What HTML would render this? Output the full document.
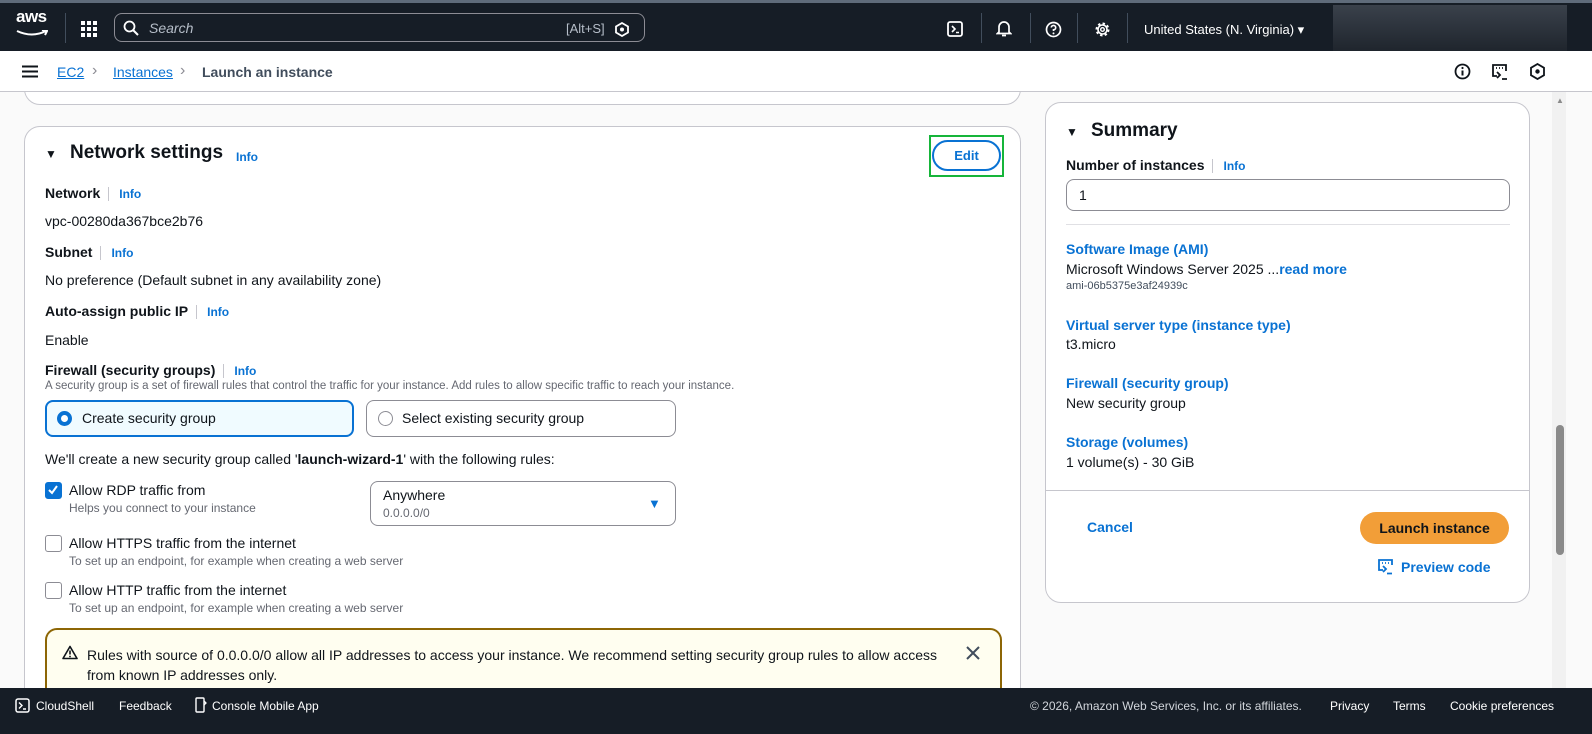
<!DOCTYPE html>
<html><head><meta charset="utf-8"><style>
*{box-sizing:border-box;margin:0;padding:0}
body{width:1592px;height:734px;overflow:hidden;background:#fafafa;font-family:"Liberation Sans",sans-serif;color:#0f141a;font-size:14px;position:relative}
.abs{position:absolute}
.top{left:0;top:0;width:1592px;height:51px;background:#161d26;border-top:3px solid #5f6b7a;z-index:10}
.crumb{left:0;top:51px;width:1592px;height:41px;background:#fff;border-bottom:1px solid #c6c6cd;z-index:10}
.card{background:#fff;border:1px solid #c6c6cd;border-radius:16px}
.lbl{font-weight:bold;font-size:14px}
.info{color:#0972d3;font-weight:bold;font-size:12px;border-left:1px solid #c6c6cd;padding-left:10px;margin-left:8px}
.blue{color:#0972d3}
.small{font-size:12px;color:#656871}
.wt{color:#fff;font-size:13px}
.cb{width:17px;height:17px;border:1.5px solid #8c8c94;border-radius:3px;background:#fff}
</style></head><body>
<div class="abs top">
 <div class="abs wt" style="left:16px;top:4px;font-size:17px;font-weight:bold;letter-spacing:-0.5px">aws</div>
 <svg class="abs" style="left:16px;top:27px" width="32" height="8"><path d="M1 1 Q16 8 30 1 M26 0 L31 1 L29 5" stroke="#fff" stroke-width="2" fill="none"/></svg>
 <div class="abs" style="left:65px;top:10px;width:1px;height:30px;background:#414d5c"></div>
 <svg class="abs" style="left:81px;top:18px" width="16" height="16" fill="#fff"><rect x="0" y="0" width="4" height="4"/><rect x="6" y="0" width="4" height="4"/><rect x="12" y="0" width="4" height="4"/><rect x="0" y="6" width="4" height="4"/><rect x="6" y="6" width="4" height="4"/><rect x="12" y="6" width="4" height="4"/><rect x="0" y="12" width="4" height="4"/><rect x="6" y="12" width="4" height="4"/><rect x="12" y="12" width="4" height="4"/></svg>
 <div class="abs" style="left:114px;top:10px;width:531px;height:29px;border:1.5px solid #8c8c94;border-radius:8px"></div>
 <svg class="abs" style="left:123px;top:17px" width="16" height="16"><circle cx="6.5" cy="6.5" r="5" stroke="#fff" stroke-width="1.8" fill="none"/><path d="M10 10 L15 15" stroke="#fff" stroke-width="2"/></svg>
 <div class="abs" style="left:149px;top:17px;color:#b6bec9;font-style:italic;font-size:14px">Search</div>
 <div class="abs" style="left:566px;top:18px;color:#b6bec9;font-size:13px">[Alt+S]</div>
 <svg class="abs" style="left:615px;top:19px" width="14" height="15"><path d="M7 1 L13 4.5 L13 10.5 L7 14 L1 10.5 L1 4.5Z" stroke="#fff" stroke-width="1.8" fill="none"/><circle cx="7" cy="7.5" r="2" fill="#fff"/></svg>
 <svg class="abs" style="left:947px;top:18px" width="16" height="16"><rect x="1" y="1" width="14" height="14" rx="2" stroke="#fff" stroke-width="1.8" fill="none"/><path d="M5 5 L8 8 L5 11 M9 11.5 H12" stroke="#fff" stroke-width="1.6" fill="none"/></svg>
 <div class="abs" style="left:981px;top:10px;width:1px;height:30px;background:#414d5c"></div>
 <svg class="abs" style="left:996px;top:17px" width="16" height="18"><path d="M3 12 V7 A5 5 0 0 1 13 7 V12 L14.5 13.5 H1.5Z M6 15.5 H10" stroke="#fff" stroke-width="1.7" fill="none"/></svg>
 <div class="abs" style="left:1030px;top:10px;width:1px;height:30px;background:#414d5c"></div>
 <svg class="abs" style="left:1045px;top:18px" width="17" height="17"><circle cx="8.5" cy="8.5" r="7" stroke="#fff" stroke-width="1.7" fill="none"/><path d="M6.3 6.5 A2.2 2.2 0 1 1 8.5 8.8 V10" stroke="#fff" stroke-width="1.6" fill="none"/><circle cx="8.5" cy="12.4" r="1" fill="#fff"/></svg>
 <div class="abs" style="left:1077px;top:10px;width:1px;height:30px;background:#414d5c"></div>
 <svg class="abs" style="left:1094px;top:18px" width="17" height="17"><circle cx="8.5" cy="8.5" r="5.5" stroke="#fff" stroke-width="3" stroke-dasharray="2.2 2.1" fill="none"/><circle cx="8.5" cy="8.5" r="4.5" stroke="#fff" stroke-width="1.6" fill="none"/><circle cx="8.5" cy="8.5" r="1.8" stroke="#fff" stroke-width="1.4" fill="none"/></svg>
 <div class="abs" style="left:1127px;top:10px;width:1px;height:30px;background:#414d5c"></div>
 <div class="abs wt" style="left:1144px;top:19px;font-size:13px">United States (N. Virginia) ▾</div>
 <div class="abs" style="left:1333px;top:2px;width:234px;height:46px;background:linear-gradient(#3a414b,#1f252d)"></div>
</div>
<div class="abs crumb">
 <svg class="abs" style="left:22px;top:14px" width="16" height="13"><path d="M0 1.5 H16 M0 6.5 H16 M0 11.5 H16" stroke="#0f141a" stroke-width="2"/></svg>
 <div class="abs blue" style="left:57px;top:13px;font-size:14px;text-decoration:underline">EC2</div>
 <div class="abs" style="left:92px;top:11px;color:#8c8c94;font-size:16px">›</div>
 <div class="abs blue" style="left:113px;top:13px;font-size:14px;text-decoration:underline">Instances</div>
 <div class="abs" style="left:180px;top:11px;color:#8c8c94;font-size:16px">›</div>
 <div class="abs" style="left:202px;top:13px;font-size:14px;color:#414d5c;font-weight:bold">Launch an instance</div>
 <svg class="abs" style="left:1454px;top:12px" width="17" height="17"><circle cx="8.5" cy="8.5" r="7" stroke="#0f141a" stroke-width="1.8" fill="none"/><path d="M8.5 7.5 V12.5" stroke="#0f141a" stroke-width="2"/><circle cx="8.5" cy="5" r="1.1" fill="#0f141a"/></svg>
 <svg class="abs" style="left:1491px;top:12px" width="18" height="18"><path d="M6 13 H2 V2 H15 V8" stroke="#0f141a" stroke-width="1.8" fill="none"/><path d="M5 5h1M8 5h1M11 5h1M6 9 L9 12 L6 15 M11 16 H16" stroke="#0f141a" stroke-width="1.8" fill="none"/></svg>
 <svg class="abs" style="left:1530px;top:12px" width="15" height="17"><path d="M7.5 1 L14 4.8 L14 12.2 L7.5 16 L1 12.2 L1 4.8Z" stroke="#0f141a" stroke-width="1.8" fill="none"/><circle cx="7.5" cy="8.5" r="2.2" fill="#0f141a"/></svg>
</div>
<div class="abs card" style="left:24px;top:60px;width:997px;height:45px"></div>
<div class="abs card" style="left:24px;top:126px;width:997px;height:600px">
 <div class="abs" style="left:20px;top:20px;font-size:12px">▼</div>
 <div class="abs" style="left:45px;top:15px;font-size:19px;font-weight:bold">Network settings</div>
 <div class="abs blue" style="left:211px;top:23px;font-size:12px;font-weight:bold">Info</div>
 <div class="abs" style="left:904px;top:8px;width:75px;height:42px;border:2px solid #16b53a"></div>
 <div class="abs" style="left:907px;top:13px;width:69px;height:31px;border:2px solid #0972d3;border-radius:16px;color:#0972d3;font-weight:bold;font-size:13px;text-align:center;line-height:27px">Edit</div>
 <div class="abs lbl" style="left:20px;top:58px">Network<span class="info">Info</span></div>
 <div class="abs" style="left:20px;top:86px">vpc-00280da367bce2b76</div>
 <div class="abs lbl" style="left:20px;top:117px">Subnet<span class="info">Info</span></div>
 <div class="abs" style="left:20px;top:145px">No preference (Default subnet in any availability zone)</div>
 <div class="abs lbl" style="left:20px;top:176px">Auto-assign public IP<span class="info">Info</span></div>
 <div class="abs" style="left:20px;top:205px">Enable</div>
 <div class="abs lbl" style="left:20px;top:235px">Firewall (security groups)<span class="info">Info</span></div>
 <div class="abs small" style="left:20px;top:253px;font-size:11.5px">A security group is a set of firewall rules that control the traffic for your instance. Add rules to allow specific traffic to reach your instance.</div>
 <div class="abs" style="left:20px;top:273px;width:309px;height:37px;border:2px solid #0972d3;border-radius:8px;background:#f0fbff"></div>
 <div class="abs" style="left:32px;top:284px;width:15px;height:15px;border-radius:50%;border:4.5px solid #0972d3;background:#fff"></div>
 <div class="abs" style="left:57px;top:283px">Create security group</div>
 <div class="abs" style="left:341px;top:273px;width:310px;height:37px;border:1px solid #8c8c94;border-radius:8px"></div>
 <div class="abs" style="left:353px;top:284px;width:15px;height:15px;border-radius:50%;border:1.5px solid #8c8c94"></div>
 <div class="abs" style="left:377px;top:283px">Select existing security group</div>
 <div class="abs" style="left:20px;top:324px">We'll create a new security group called '<b>launch-wizard-1</b>' with the following rules:</div>
 <div class="abs cb" style="left:20px;top:355px;background:#0972d3;border-color:#0972d3"><svg width="14" height="14" style="position:absolute;left:0;top:0"><path d="M3 7 L6 10 L11 3" stroke="#fff" stroke-width="2" fill="none"/></svg></div>
 <div class="abs" style="left:44px;top:355px">Allow RDP traffic from</div>
 <div class="abs small" style="left:44px;top:374px">Helps you connect to your instance</div>
 <div class="abs" style="left:345px;top:354px;width:306px;height:45px;border:1px solid #8c8c94;border-radius:8px"></div>
 <div class="abs" style="left:358px;top:360px">Anywhere</div>
 <div class="abs small" style="left:358px;top:379px">0.0.0.0/0</div>
 <div class="abs blue" style="left:623px;top:369px;font-size:13px">▼</div>
 <div class="abs cb" style="left:20px;top:408px"></div>
 <div class="abs" style="left:44px;top:408px">Allow HTTPS traffic from the internet</div>
 <div class="abs small" style="left:44px;top:427px">To set up an endpoint, for example when creating a web server</div>
 <div class="abs cb" style="left:20px;top:455px"></div>
 <div class="abs" style="left:44px;top:455px">Allow HTTP traffic from the internet</div>
 <div class="abs small" style="left:44px;top:474px">To set up an endpoint, for example when creating a web server</div>
 <div class="abs" style="left:20px;top:501px;width:957px;height:80px;border:2px solid #8d6605;border-radius:12px;background:#fffef0"></div>
 <svg class="abs" style="left:37px;top:518px" width="16" height="15"><path d="M8 1.5 L15 13.5 H1Z" stroke="#0f141a" stroke-width="1.6" fill="none" stroke-linejoin="round"/><path d="M8 5.5 V9.5" stroke="#0f141a" stroke-width="1.6"/><circle cx="8" cy="11.5" r=".9" fill="#0f141a"/></svg>
 <div class="abs" style="left:62px;top:518px;width:860px;line-height:20px">Rules with source of 0.0.0.0/0 allow all IP addresses to access your instance. We recommend setting security group rules to allow access from known IP addresses only.</div>
 <svg class="abs" style="left:941px;top:519px" width="14" height="14"><path d="M1 1 L13 13 M13 1 L1 13" stroke="#414d5c" stroke-width="2"/></svg>
</div>
<div class="abs card" style="left:1045px;top:102px;width:485px;height:501px">
 <div class="abs" style="left:20px;top:22px;font-size:12px">▼</div>
 <div class="abs" style="left:45px;top:17px;font-size:19px;font-weight:bold">Summary</div>
 <div class="abs lbl" style="left:20px;top:54px">Number of instances<span class="info">Info</span></div>
 <div class="abs" style="left:20px;top:76px;width:444px;height:32px;border:1px solid #8c8c94;border-radius:8px;padding:7px 12px">1</div>
 <div class="abs" style="left:20px;top:121px;width:444px;height:1px;background:#e0e0e4"></div>
 <div class="abs blue" style="left:20px;top:138px;font-weight:bold">Software Image (AMI)</div>
 <div class="abs" style="left:20px;top:158px">Microsoft Windows Server 2025 ...<b class="blue">read more</b></div>
 <div class="abs small" style="left:20px;top:177px;color:#414d5c;font-size:11px">ami-06b5375e3af24939c</div>
 <div class="abs blue" style="left:20px;top:214px;font-weight:bold">Virtual server type (instance type)</div>
 <div class="abs" style="left:20px;top:233px">t3.micro</div>
 <div class="abs blue" style="left:20px;top:272px;font-weight:bold">Firewall (security group)</div>
 <div class="abs" style="left:20px;top:292px">New security group</div>
 <div class="abs blue" style="left:20px;top:331px;font-weight:bold">Storage (volumes)</div>
 <div class="abs" style="left:20px;top:351px">1 volume(s) - 30 GiB</div>
 <div class="abs" style="left:0;top:387px;width:483px;height:1px;background:#c6c6cd"></div>
 <div class="abs blue" style="left:41px;top:416px;font-weight:bold;font-size:14px">Cancel</div>
 <div class="abs" style="left:314px;top:409px;width:149px;height:32px;border-radius:16px;background:#f29e38;text-align:center;line-height:32px;font-weight:bold;font-size:14px">Launch instance</div>
 <svg class="abs" style="left:331px;top:455px" width="17" height="17"><path d="M6 12 H2 V2 H15 V7" stroke="#0972d3" stroke-width="1.8" fill="none"/><path d="M5 5h1M8 5h1M11 5h1M6 8 L9 11 L6 14 M10 15.5 H15" stroke="#0972d3" stroke-width="1.8" fill="none"/></svg>
 <div class="abs blue" style="left:355px;top:456px;font-weight:bold;font-size:14px">Preview code</div>
</div>
<div class="abs" style="left:1552px;top:92px;width:14px;height:596px;background:#f1f1f1"></div>
<div class="abs" style="left:1556px;top:425px;width:8px;height:130px;background:#8a8a8a;border-radius:4px"></div>
<div class="abs" style="left:1556px;top:96px;color:#8a8a8a;font-size:8px">▲</div>
<div class="abs" style="left:0;top:688px;width:1592px;height:46px;background:#161d26;z-index:10">
 <svg class="abs" style="left:15px;top:10px" width="15" height="15"><rect x="1" y="1" width="13" height="13" rx="2" stroke="#fff" stroke-width="1.5" fill="none"/><path d="M4 4.5 L7 7.5 L4 10.5 M8 11 H11" stroke="#fff" stroke-width="1.4" fill="none"/></svg>
 <div class="abs wt" style="left:36px;top:11px;font-size:12px">CloudShell</div>
 <div class="abs wt" style="left:119px;top:11px;font-size:12px">Feedback</div>
 <svg class="abs" style="left:195px;top:9px" width="12" height="17"><rect x="1" y="1" width="8" height="14" rx="1" stroke="#fff" stroke-width="1.4" fill="none"/><path d="M9 4 L11 6 L9 8" stroke="#fff" stroke-width="1.3" fill="none"/></svg>
 <div class="abs wt" style="left:212px;top:11px;font-size:12px">Console Mobile App</div>
 <div class="abs" style="left:1030px;top:11px;font-size:12px;color:#d1d5db">© 2026, Amazon Web Services, Inc. or its affiliates.</div>
 <div class="abs wt" style="left:1330px;top:11px;font-size:12px">Privacy</div>
 <div class="abs wt" style="left:1393px;top:11px;font-size:12px">Terms</div>
 <div class="abs wt" style="left:1450px;top:11px;font-size:12px">Cookie preferences</div>
</div>
</body></html>
